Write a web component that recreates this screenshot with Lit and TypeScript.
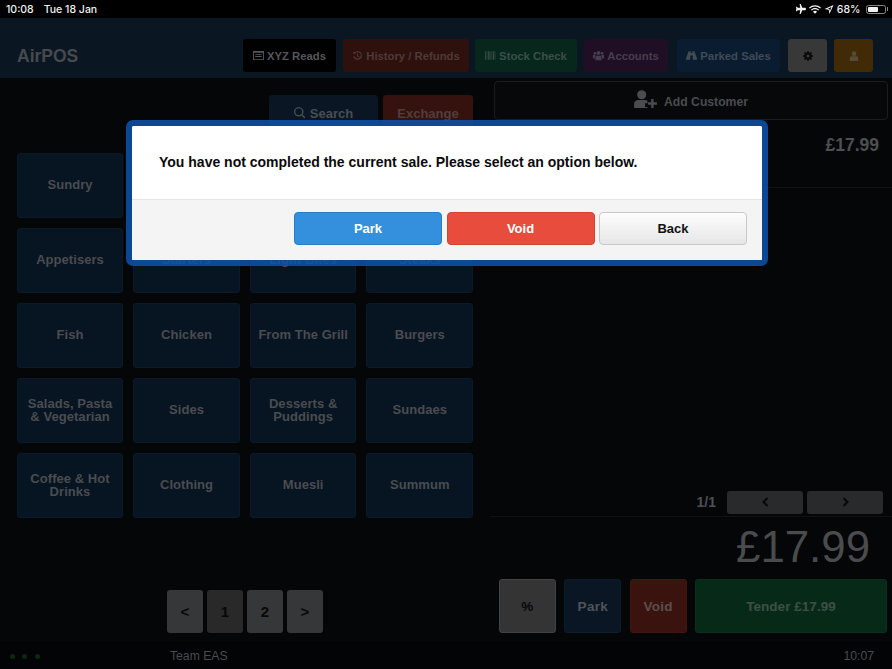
import { LitElement, html, css, svg } from "lit";
import { customElement } from "lit/decorators.js";

const icons = {
  reads: svg`<path fill-rule="evenodd" d="M0 1h12v10H0zM1 3v7h10V3zM2.5 4.5h7v1h-7zm0 2h7v1h-7z"/>`,
  history: svg`<path d="M2.2 1.2 4.6 3.6 1 4zM6.5 1A5 5 0 1 1 1.6 7h1.3A3.8 3.8 0 1 0 3.6 3.4l-.9-.9A5 5 0 0 1 6.5 1zM6 3.5h1.1v2.9l2 1.2-.6.9L6 7z"/>`,
  barcode: svg`<path d="M0 1h1v10H0zm2 0h.7v10H2zm1.7 0h1.6v10H3.700zm2.500 0h.7v10h-.7zm1.600 0h.7v10h-.7zm1.600 0h1.500v10H9.400zm2.300 0h.5v10h-.5z"/>`,
  users: svg`<circle cx="6.500" cy="3" r="2.200"/><circle cx="2.300" cy="3.400" r="1.600"/><circle cx="10.700" cy="3.400" r="1.600"/><path d="M3.300 6.200h6.400l.6 5.300H2.700zM0 5.500h2.800l-.6 4H0zm10.200 0H13v4h-2.200z"/>`,
  binoculars: svg`<path d="M3 1h2.500v2H7.500V1H10l3 8.500V11H8V6H5v5H0V9.500z"/>`,
  gear: svg`<path fill-rule="evenodd" d="M5.200 0h1.600l.3 1.600 1.100.5L9.600 1.200l1.200 1.200-.9 1.400.5 1.100 1.600.3v1.600l-1.600.3-.5 1.100.9 1.400-1.200 1.200-1.400-.9-1.100.5-.3 1.600H5.200l-.3-1.600-1.100-.5-1.400.9-1.200-1.200.9-1.400-.5-1.100L0 6.800V5.200l1.600-.3.5-1.100-.9-1.400 1.200-1.200 1.400.9 1.100-.5zM6 4.200a1.800 1.800 0 1 0 0 3.600 1.800 1.800 0 0 0 0-3.600z"/>`,
  user: svg`<circle cx="6" cy="3.200" r="2.800"/><path d="M1 12V8.500C1 7 2.300 6.200 3.500 6.200h5C9.700 6.200 11 7 11 8.500V12z"/>`,
  search: svg`<path fill-rule="evenodd" d="M5.500 0a5.500 5.500 0 0 1 4.400 8.800l3.300 3.300-1.200 1.200-3.300-3.300A5.500 5.500 0 1 1 5.500 0zm0 1.600a3.900 3.900 0 1 0 0 7.800 3.900 3.900 0 0 0 0-7.800z"/>`,
  addUser: svg`<circle cx="8" cy="5" r="4.800"/><path d="M0 19v-4.500C0 11.800 2.500 10.500 4.500 10.500h7c.9 0 1.700.2 2.500.6V14h-2.500v4H14v1z"/><path d="M18 9.500h2.500V13H24v2.500h-3.500V19H18v-3.500h-3.500V13H18z"/>`,
};

const rows: string[][] = [
  ["Sundry", "", "", ""],
  ["Appetisers", "Starters", "Light Bites", "Steaks"],
  ["Fish", "Chicken", "From The Grill", "Burgers"],
  ["Salads, Pasta & Vegetarian", "Sides", "Desserts & Puddings", "Sundaes"],
  ["Coffee & Hot Drinks", "Clothing", "Muesli", "Summum"],
];

@customElement("app-root")
export class AppRoot extends LitElement {
  static styles = css`
    :host {
      display: block;
      position: relative;
      width: 892px;
      height: 669px;
      overflow: hidden;
      background: #050608;
      font-family: "Liberation Sans", Arial, sans-serif;
      color: #505254;
    }
    .status {
      height: 18px;
      background: #000;
      color: #f2f2f2;
      font-family: Inter, "Liberation Sans", sans-serif;
      font-size: 10.5px;
      font-weight: 500;
      display: flex;
      align-items: center;
      padding: 0 4px 0 6px;
    }
    .status .date { margin-left: 10px; }
    .status .right { margin-left: auto; display: flex; align-items: center; gap: 3px; }
    .status svg { fill: #f2f2f2; display: block; }
    .battery {
      width: 20px;
      height: 9px;
      box-sizing: border-box;
      border: 1px solid #888;
      border-radius: 2.5px;
      padding: 1px;
      display: flex;
      margin-left: 2px;
    }
    .battery i { display: block; width: 68%; background: #f2f2f2; border-radius: 1px; }
    .nub { width: 1.500px; height: 4px; background: #888; margin-left: -2px; }
    .header {
      height: 60px;
      box-sizing: border-box;
      background: #0a1622;
      display: flex;
      align-items: flex-start;
      padding: 21px 0 0 17px;
    }
    .brand {
      font-size: 17.5px;
      font-weight: 700;
      color: #464a4f;
      width: 226px;
      line-height: 34px;
    }
    .hbtn {
      height: 33px;
      box-sizing: border-box;
      border-radius: 3px;
      display: flex;
      align-items: center;
      justify-content: center;
      gap: 3px;
      font-size: 11.300px;
      font-weight: 700;
      white-space: nowrap;
    }
    .hbtn svg { width: 11px; height: 11px; fill: currentColor; flex: none; }
    .h-xyz { width: 93px; background: #010101; color: #55575a; }
    .h-his { width: 126px; margin-left: 7px; background: #2e100c; color: #4e3b39; }
    .h-sto { width: 102px; margin-left: 6px; background: #07261c; color: #3a4f48; }
    .h-acc { width: 84px; margin-left: 7px; background: #200e24; color: #473e50; }
    .h-par { width: 103px; margin-left: 9px; background: #0a1c30; color: #404b56; }
    .h-gear { width: 39px; margin-left: 8px; background: #383838; color: #0a0a0a; }
    .h-user { width: 39px; margin-left: 7px; background: #412b06; color: #564a3a; }
    .h-gear svg, .h-user svg { width: 10px; height: 10px; }

    .main { display: flex; height: 563px; }
    .left { width: 490px; flex: none; box-sizing: border-box; padding: 17px 17px 8px 17px; display: flex; flex-direction: column; }
    .tools { display: flex; justify-content: flex-end; gap: 5px; }
    .tool {
      height: 38px;
      border-radius: 3px;
      display: flex;
      justify-content: center;
      padding-top: 11px;
      box-sizing: border-box;
      gap: 4px;
      font-size: 13px;
      font-weight: 700;
    }
    .tool svg { width: 12px; height: 12px; fill: currentColor; margin-top: 1px; }
    .t-search { width: 109px; background: #0a1624; color: #484e53; }
    .t-ex { width: 90px; background: #36120e; color: #503e3c; }
    .grid {
      display: grid;
      grid-template-columns: 106px 107px 106.300px 107px;
      grid-auto-rows: 65px;
      column-gap: 10px;
      row-gap: 10px;
      margin-top: 20px;
    }
    .cell {
      background: #071422;
      border: 1px solid #0a1a2b;
      box-sizing: border-box;
      border-radius: 3px;
      display: flex;
      align-items: center;
      justify-content: center;
      text-align: center;
      font-size: 13px;
      font-weight: 700;
      line-height: 13px;
      letter-spacing: 0.05px;
      color: #4a4c4f;
      padding: 0 4px 1.500px;
    }
    .pager { margin-top: auto; display: flex; justify-content: center; gap: 4px; }
    .pg {
      width: 36px;
      height: 43px;
      border-radius: 3px;
      background: #363738;
      color: #080808;
      font-size: 15px;
      font-weight: 700;
      display: flex;
      align-items: center;
      justify-content: center;
    }
    .pg.on { background: #29292a; }

    .right-col { flex: 1; min-width: 0; display: flex; flex-direction: column; box-sizing: border-box; padding: 3px 4px 8px 0; }
    .add {
      height: 39px;
      margin-left: 4px;
      box-sizing: border-box;
      border: 1px solid #1a1c1e;
      border-radius: 4px;
      display: flex;
      align-items: center;
      justify-content: center;
      gap: 7px;
      font-size: 12.200px;
      font-weight: 700;
      color: #4a4c4f;
      background: #07080a;
      padding-top: 2px;
    }
    .add svg { width: 23px; height: 19px; fill: #4a4c4f; margin-top: -4px; }
    .line {
      height: 68px;
      margin-right: -4px;
      box-sizing: border-box;
      border-bottom: 1px solid #111315;
      text-align: right;
      padding: 15px 13px 0 0;
      font-size: 17.5px;
      font-weight: 700;
      color: #4e4f51;
    }
    .spacer { flex: 1; }
    .pages {
      display: flex;
      align-items: center;
      justify-content: flex-end;
      gap: 4px;
      height: 30px;
      margin-right: -4px;
      padding: 3px 9px 2px 0;
      box-sizing: border-box;
      border-bottom: 1px solid #0e1217;
      font-size: 14px;
      font-weight: 700;
      color: #4e4f53;
    }
    .pages span { margin-right: 7px; }
    .arrow {
      width: 76px;
      height: 23px;
      border-radius: 3px;
      background: #292a2b;
      display: flex;
      align-items: center;
      justify-content: center;
    }
    .arrow svg { width: 7px; height: 10px; fill: none; stroke: #080808; stroke-width: 2; }
    .total {
      height: 62px;
      text-align: right;
      padding-right: 18px;
      font-size: 43.800px;
      line-height: 59px;
      color: #4a4b4c;
    }
    .actions { display: flex; gap: 8.330px; margin: 0 1px 0 9px; height: 54px; }
    .act {
      border-radius: 3px;
      width: 57px;
      display: flex;
      align-items: center;
      justify-content: center;
      font-size: 13.5px;
      font-weight: 700;
      letter-spacing: 0.3px;
      box-sizing: border-box;
    }
    .a-pct { background: #343434; border: 1px solid #424242; color: #080808; }
    .a-park { background: #0a1624; border: 1px solid #0d1b2b; color: #4e545a; }
    .a-void { background: #3a120e; border: 1px solid #411610; color: #5c4f4d; }
    .a-tender { flex: 1; background: #072a18; border: 1px solid #0a301c; color: #3c5046; letter-spacing: 0.05px; }

    .footer {
      height: 28px;
      box-sizing: border-box;
      background: #030405;
      display: flex;
      align-items: center;
      font-size: 12.2px;
      color: #4a4b4e;
      padding: 2px 18px 0 10px;
    }
    .dots { display: flex; gap: 7.3px; width: 160px; }
    .dots i { width: 5px; height: 5px; border-radius: 50%; background: #0a2a0f; display: block; }
    .footer .time { margin-left: auto; }

    .modal {
      position: absolute;
      left: 126px;
      top: 120px;
      width: 642px;
      height: 146px;
      box-sizing: border-box;
      border: 6.500px solid rgba(13, 84, 172, 0.85);
      border-radius: 7px;
      background: #fff;
      background-clip: padding-box;
      display: flex;
      flex-direction: column;
      overflow: hidden;
    }
    .msg {
      height: 74px;
      flex: none;
      box-sizing: border-box;
      border-bottom: 1px solid #e4e4e4;
      display: flex;
      align-items: center;
      padding-left: 27px;
      color: #0a0a0a;
      font-size: 14px;
      font-weight: 700;
      padding-bottom: 1px;
    }
    .mfoot {
      flex: 1;
      background: #f4f4f4;
      display: flex;
      justify-content: flex-end;
      gap: 4.500px;
      padding: 12px 15px 0 0;
    }
    .mb {
      width: 148px;
      height: 33px;
      box-sizing: border-box;
      border-radius: 4px;
      display: flex;
      align-items: center;
      justify-content: center;
      font-size: 13px;
      font-weight: 700;
    }
    .m-park { background: #3490dc; border: 1px solid #2a7cc2; color: #fff; }
    .m-void { background: #e74c3c; border: 1px solid #cf4436; color: #fff; }
    .m-back { background: linear-gradient(#fdfdfd, #e6e6e6); border: 1px solid #c8c8c8; color: #111; }
  `;

  private ic(d: unknown, vb = "0 0 13 12") {
    return html`<svg viewBox=${vb}>${d}</svg>`;
  }

  render() {
    return html`
      <div class="status">
        <span>10:08</span><span class="date">Tue 18 Jan</span>
        <div class="right">
          <svg width="11" height="10" viewBox="0 0 12 11"><path d="M5 0h1.200L8 4h3c.6 0 1 .6 1 1.500S11.600 7 11 7H8L6.200 11H5l.7-4H3L2 8H1l.4-2.500L1 3h1l1 1h2.700z"/></svg>
          <svg width="12" height="9" viewBox="0 0 14 10"><path d="M7 0c2.700 0 5.100 1 7 2.800l-1 1A8.800 8.800 0 0 0 7 1.400C4.700 1.400 2.600 2.300 1 3.800l-1-1C1.900 1 4.300 0 7 0zm0 3.300c1.800 0 3.400.7 4.700 1.900l-1 1A5.400 5.400 0 0 0 7 4.700c-1.400 0-2.700.6-3.700 1.500l-1-1C3.600 4 5.200 3.300 7 3.300zm0 3.300c.9 0 1.700.3 2.400.9L7 10 4.600 7.500c.7-.6 1.500-.9 2.400-.9z"/></svg>
          <svg width="10" height="9" viewBox="0 0 10 10"><path d="M10 0 5.500 10l-.8-4.700L0 4.500zM7.700 2.300 3.700 4.300l1.900.4.400 1.900z" fill-rule="evenodd"/></svg>
          <span>68%</span>
          <div class="battery"><i></i></div>
          <div class="nub"></div>
        </div>
      </div>
      <div class="header">
        <div class="brand">AirPOS</div>
        <div class="hbtn h-xyz">${this.ic(icons.reads, "0 0 12 12")}XYZ Reads</div>
        <div class="hbtn h-his">${this.ic(icons.history)}History / Refunds</div>
        <div class="hbtn h-sto">${this.ic(icons.barcode)}Stock Check</div>
        <div class="hbtn h-acc">${this.ic(icons.users)}Accounts</div>
        <div class="hbtn h-par">${this.ic(icons.binoculars)}Parked Sales</div>
        <div class="hbtn h-gear">${this.ic(icons.gear, "0 0 12 12")}</div>
        <div class="hbtn h-user">${this.ic(icons.user, "0 0 12 12")}</div>
      </div>
      <div class="main">
        <div class="left">
          <div class="tools">
            <div class="tool t-search">${this.ic(icons.search, "0 0 14 14")}Search</div>
            <div class="tool t-ex">Exchange</div>
          </div>
          <div class="grid">
            ${rows.flat().map((t) => html`<div class="cell">${t}</div>`)}
          </div>
          <div class="pager">
            <div class="pg">&lt;</div>
            <div class="pg on">1</div>
            <div class="pg">2</div>
            <div class="pg">&gt;</div>
          </div>
        </div>
        <div class="right-col">
          <div class="add">${this.ic(icons.addUser, "0 0 24 20")}Add Customer</div>
          <div class="line">£17.99</div>
          <div class="spacer"></div>
          <div class="pages">
            <span>1/1</span>
            <div class="arrow"><svg viewBox="0 0 7 10"><path d="M5.500 1 1.500 5l4 4"/></svg></div>
            <div class="arrow"><svg viewBox="0 0 7 10"><path d="M1.500 1l4 4-4 4"/></svg></div>
          </div>
          <div class="total">£17.99</div>
          <div class="actions">
            <div class="act a-pct">%</div>
            <div class="act a-park">Park</div>
            <div class="act a-void">Void</div>
            <div class="act a-tender">Tender £17.99</div>
          </div>
        </div>
      </div>
      <div class="footer">
        <div class="dots"><i></i><i></i><i></i></div>
        <span>Team EAS</span>
        <span class="time">10:07</span>
      </div>
      <div class="modal">
        <div class="msg">You have not completed the current sale. Please select an option below.</div>
        <div class="mfoot">
          <div class="mb m-park">Park</div>
          <div class="mb m-void">Void</div>
          <div class="mb m-back">Back</div>
        </div>
      </div>
    `;
  }
}
